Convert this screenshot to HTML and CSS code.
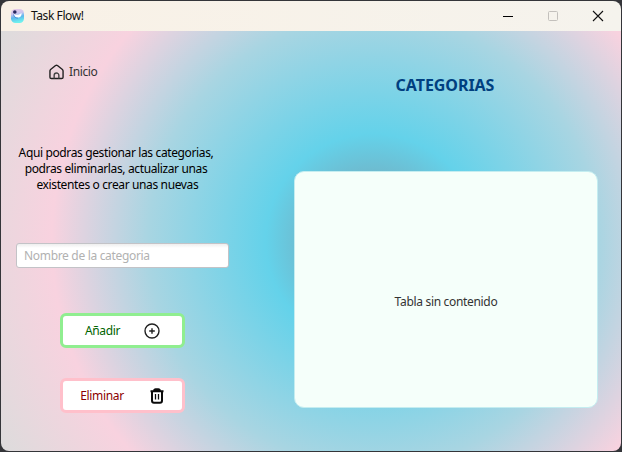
FILE: index.html
```html
<!DOCTYPE html>
<html lang="es">
<head>
<meta charset="utf-8">
<title>Task Flow!</title>
<link rel="stylesheet" href="styles.css">
</head>
<body>
<div class="window">
  <header class="titlebar">
    <svg class="app-icon" viewBox="0 0 13 14">
      <defs><linearGradient id="g" x1="0" y1="0" x2="0.2" y2="1"><stop offset="0" stop-color="#edcbe6"/><stop offset=".4" stop-color="#c9c4f0"/><stop offset=".65" stop-color="#5cb8ec"/><stop offset="1" stop-color="#6ff0ee"/></linearGradient></defs>
      <rect width="13" height="14" rx="4.500" fill="url(#g)"/>
      <path d="M3 5C5 6.500 8 6 10.500 4C11 7.500 8.500 9 6 8.500C4 8 3 7 3 5Z" fill="#fff"/>
      <path d="M2.500 5.500C3 8 4.500 9 7 9.200" fill="none" stroke="#4a86d8" stroke-width=".8"/>
      <circle cx="3.800" cy="3" r="1.800" fill="#28285f"/>
    </svg>
    <span class="app-name">Task Flow!</span>
    <div class="controls">
      <svg viewBox="0 0 12 12"><path d="M1 6.500H11" stroke="#000"/></svg>
      <svg viewBox="0 0 12 12"><rect x="1.500" y="1.500" width="9" height="9" rx="1" fill="none" stroke="#c3c0bc"/></svg>
      <svg viewBox="0 0 12 12"><path d="M1 1L11 11M11 1L1 11" stroke="#111" stroke-width="1.100"/></svg>
    </div>
  </header>
  <main class="content">
    <section class="side">
      <a class="home">
        <svg viewBox="0 0 16 16" fill="none" stroke="#222" stroke-width="1.500" stroke-linejoin="round"><path d="M1 7Q1 6 1.700 5.400L7 1.100Q8 .4 9 1.100L14.300 5.400Q15 6 15 7V13.500Q15 15 13.500 15H2.500Q1 15 1 13.500Z"/><path d="M5.500 15V11.500A2.500 2.500 0 0 1 10.500 11.500V15" stroke="#444"/></svg>
        <span>Inicio</span>
      </a>
      <p class="intro">Aqui podras gestionar las categorias,<br>podras eliminarlas, actualizar unas<br>&nbsp;existentes o crear unas nuevas</p>
      <input class="field" type="text" placeholder="Nombre de la categoria">
      <button class="btn add"><span>Añadir</span>
        <svg viewBox="0 0 16 16" fill="none" stroke="#222" stroke-width="1.400"><circle cx="8" cy="8" r="7"/><path d="M8 5.200V10.800M5.200 8H10.800"/></svg>
      </button>
      <button class="btn remove"><span>Eliminar</span>
        <svg viewBox="0 0 16 16" fill="none" stroke="#0b0b0b" stroke-width="2"><path d="M1.500 3.200H14.500M5 2.500Q5.500 1.300 6.500 1.300H9.500Q10.500 1.300 11 2.500"/><path d="M3 3.500V12.500Q3 14.700 5 14.700H11Q13 14.700 13 12.500V3.500"/><path d="M6.500 6V11.500M9.500 6V11.500" stroke-width="1.300"/></svg>
      </button>
    </section>
    <section class="panel">
      <h1 class="title">CATEGORIAS</h1>
      <div class="table"><span>Tabla sin contenido</span></div>
    </section>
  </main>
</div>
</body>
</html>
```

FILE: styles.css
```css
* { box-sizing: border-box; }
body {
  margin: 0;
  width: 622px;
  height: 452px;
  padding: 1px;
  overflow: hidden;
  background: #343539;
  font: 12px/16px "Noto Sans", "Open Sans", sans-serif;
}
.window {
  width: 620px;
  height: 450px;
  border-radius: 8px;
  overflow: hidden;
}
.titlebar {
  height: 30px;
  display: flex;
  align-items: center;
  padding: 0 17px 0 10px;
  background: linear-gradient(90deg, #f9f1e6, #f5f3ed);
}
.app-icon { width: 13px; height: 14px; }
.app-name { margin-left: 7px; letter-spacing: -0.42px; color: #111; }
.controls { margin-left: auto; display: flex; gap: 33px; }
.controls svg { width: 12px; height: 12px; }
.content {
  display: flex;
  height: 420px;
  background: radial-gradient(circle 535px at 372px 210px, #80919f 0%, #64d2ea 20%, #a8d5e2 42%, #f8d2df 60%, #dcdcdc 80%);
}
.side {
  width: 229px;
  padding: 32px 0 0 15px;
  display: flex;
  flex-direction: column;
  align-items: flex-start;
}
.home {
  display: flex;
  align-items: center;
  gap: 5px;
  margin-left: 33px;
  height: 18px;
  color: #333;
}
.home svg { width: 15px; height: 16px; }
.home span { letter-spacing: -0.4px; }
.intro {
  margin: 64px 0 0;
  width: 200px;
  text-align: center;
  white-space: nowrap;
  color: #000;
  letter-spacing: -0.37px;
}
.field {
  width: 213px;
  height: 25px;
  margin: 50px 0 0;
  padding: 0 7px;
  border: 1px solid #c3c3c7;
  border-radius: 3px;
  background: linear-gradient(#eee, #fff 4px);
  font: inherit;
  letter-spacing: -0.32px;
}
.field::placeholder { color: #b1b1b1; opacity: 1; }
.btn {
  width: 125px;
  height: 35px;
  margin-left: 44px;
  padding: 0;
  border: 3px solid;
  border-radius: 6px;
  background: #fff;
  font: inherit;
  letter-spacing: -0.35px;
  display: flex;
  align-items: center;
  justify-content: center;
}
.btn svg { width: 16px; height: 16px; }
.add { margin-top: 45px; border-color: #90ee90; gap: 24px; }
.add span { color: #006400; }
.remove { margin-top: 30px; border-color: #ffc0cb; gap: 25px; }
.remove span { color: #8b0000; }
.panel { padding: 43px 0 0 64px; display: flex; flex-direction: column; }
.title {
  margin: 0;
  width: 302px;
  text-align: center;
  font-size: 16px;
  line-height: 22px;
  font-weight: 700;
  letter-spacing: -0.05px;
  color: #003f80;
}
.table {
  width: 304px;
  height: 237px;
  margin-top: 75px;
  border: 1px solid #c4edf0;
  border-radius: 10px;
  background: #f5fffa;
  display: flex;
  align-items: center;
  justify-content: center;
  padding-top: 25px;
  color: #333;
  letter-spacing: -0.32px;
}
```
